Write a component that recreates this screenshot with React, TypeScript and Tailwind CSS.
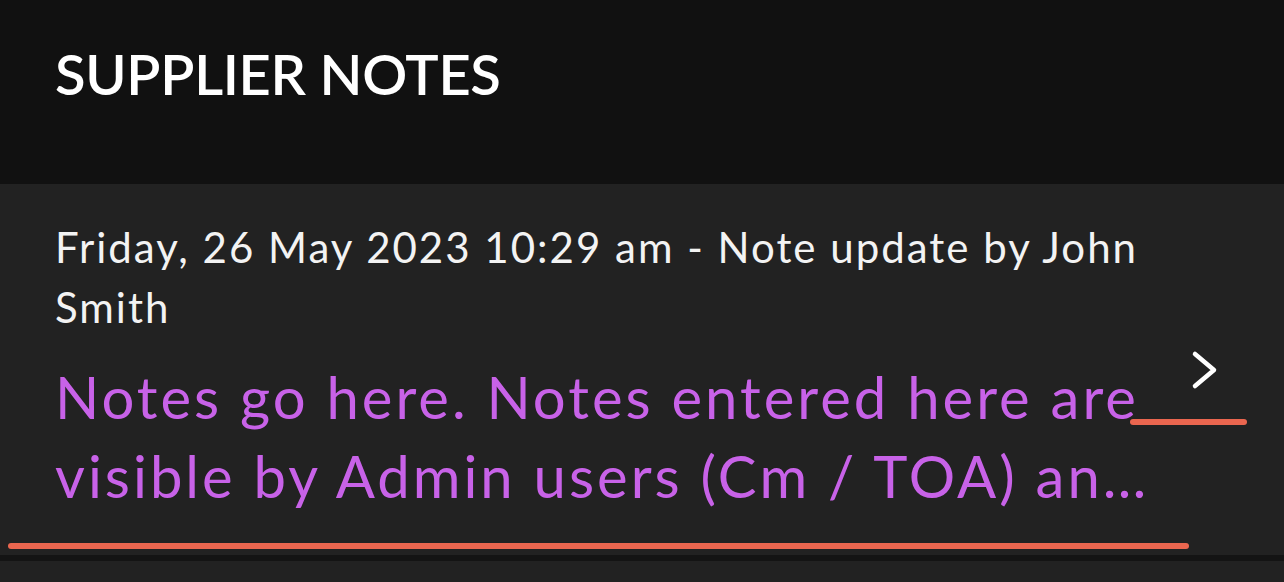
const note =
  "Notes go here. Notes entered here are visible by Admin users (Cm / TOA) and Suppliers but not by Drivers or Customers.";

export default function App() {
  return (
    <div className="relative w-full h-[582px] overflow-hidden bg-[#222222] font-['Lato',sans-serif]">
      {/* header */}
      <header className="h-[184px] bg-[#111111] pl-[55px] pt-[46px]">
        <h1 className="text-[56px] leading-none font-semibold text-white tracking-[-0.3px]">
          SUPPLIER NOTES
        </h1>
      </header>

      {/* note row */}
      <div className="flex h-[371px] items-center">
        <div className="self-start w-[1167px] pl-[55px] pt-[33px]">
          <p className="text-[42px] leading-[60px] tracking-[2px] text-[#f3f3f3]">
            Friday, 26 May 2023 10:29 am - Note update by John Smith
          </p>
          <p className="mt-[20px] text-[58px] leading-[79px] tracking-[3px] text-[#c862e8] line-clamp-2">
            {note}
          </p>
        </div>
        <div className="ml-[24px]">
          <svg width="28" height="40" viewBox="0 0 28 40" fill="none">
            <polyline
              points="4,4 23,20 4,36"
              stroke="#ffffff"
              strokeWidth="4.5"
              strokeLinecap="round"
              strokeLinejoin="round"
            />
          </svg>
        </div>
      </div>
      <div className="h-[6px] bg-[#141414]" />

      {/* markup lines over the screenshot */}
      <div className="absolute left-[1130px] top-[419px] w-[117px] h-[6px] rounded-full bg-[#ea664f]" />
      <div className="absolute left-[8px] top-[543px] w-[1181px] h-[6px] rounded-full bg-[#ea664f]" />
    </div>
  );
}
